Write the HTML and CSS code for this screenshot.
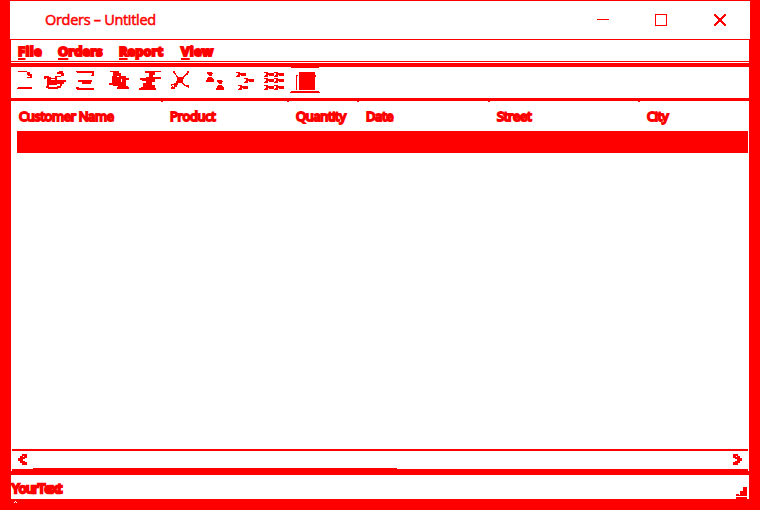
FILE: index.html
```html
<!DOCTYPE html>
<html lang="en">
<head><meta charset="utf-8"><title>Orders – Untitled</title><link rel="stylesheet" href="styles.css"></head>
<body>
<div class="window">
<header class="titlebar"><span class="title">Orders – Untitled</span>
<svg class="controls" width="140" height="38" viewBox="597 1 140 38"><path d="M597 19h12v1h-12z"/><path d="M655 14h12v12h-12zM656 15v10h10v-10z" fill-rule="evenodd"/><path d="M714 14h2v1h1v1h1v1h1v1h2v-1h1v-1h1v-1h1v-1h2v2h-1v1h-1v1h-1v1h-1v2h1v1h1v1h1v1h1v2h-2v-1h-1v-1h-1v-1h-1v-1h-2v1h-1v1h-1v1h-1v1h-2v-2h1v-1h1v-1h1v-1h1v-2h-1v-1h-1v-1h-1v-1h-1z"/></svg></header>
<nav class="menu"><span class="m1"><u>F</u>ile</span><span class="m2"><u>O</u>rders</span><span class="m3"><u>R</u>eport</span><span class="m4"><u>V</u>iew</span></nav>
<div class="rule"></div>
<div class="toolbar">
<svg width="30" height="31" viewBox="11 67 30 31"><path d="M17 71h10v1h3v2h2v4h-5v-1h3v-1h-2v-1h-1v-3h-9v-1h-1zM18 87h14v2h-15v-1h1z"/></svg>
<svg width="30" height="31" viewBox="41 67 30 31"><path fill-rule="evenodd" d="M57 72h2v-1h4v2h1v3h-3v-2h-4v-1h-1zM44 76h5v1h2v1h4v-2h6v1h-4v3h9v2h-2v2h-2v2h-1v2h-3v1h-10v-1h-2v-9h-2zM46 78v8h1v-8zM51 80v-1h4v1zM49 85v2h8v-1h3v-2h-3v1z"/></svg>
<svg width="32" height="31" viewBox="71 67 32 31"><path d="M76 71h18v5h-3v-1h1v-2h-15v-1h-1zM78 80h14v2h-1v2h-9v-2h-4zM76 87h3v1h15v2h-17v-1h-1z"/></svg>
<svg width="31" height="31" viewBox="103 67 31 31"><path fill-rule="evenodd" d="M110 71h9v2h2v3h5v2h3v2h-3v6h2v1h1v2h-12v-2h1v-1h-5v-1h-4v-2h3v-7h1v-4h-3zM117 76v1h2v-1zM121 79v3h1v-3z"/></svg>
<svg width="32" height="31" viewBox="134 67 32 31"><path d="M145 71h16v1h-6v3h-2v2h8v2h-6v3h-3v3h3v3h1v2h-17v-2h2v-1h2v-4h3v-2h-4v-1h-2v-2h6v-1h3v-4h-4z"/></svg>
<svg width="35" height="31" viewBox="166 67 35 31"><path d="M172 71h3v2h1v2h1v1h1v1h5v-1h1v-1h1v-1h1v-1h1v-2h2v2h-1v1h-1v1h-1v1h-1v1h-1v2h-1v4h1v1h1v1h2v1h2v2h-1v-1h-2v-1h-2v-1h-1v-1h-1v-1h-4v2h-1v2h-2v1h-2v1h-2v-2h3v-2h-2v1h-1v-2h3v-1h2v-2h1v-4h-1v-2h-1v-1h-1v-1h-1v-2h-1z"/><path d="M172 86h1v2h-1zM172 88h3v1h-3zM186 74h2v1h-2zM187 85h2v1h-2z"/></svg>
<svg width="30" height="31" viewBox="201 67 30 31"><path id="person" d="M207 72h5v1h1v1h-1v2h-3v-1h-1v-1h-1zM208 77h4v1h1v1h1v3h-8v-2h1v-2h1z"/><use href="#person" x="10" y="8"/></svg>
<svg width="29" height="31" viewBox="231 67 29 31"><path id="key" d="M236 72h4v1h6v3h-5v-1h-1v2h-4v-1h1v-1h1v-2h-2z"/><use href="#key" x="8" y="6"/><use href="#key" x="2" y="13"/></svg>
<svg width="30" height="31" viewBox="260 67 30 31"><use href="#key" x="28"/><use href="#key" x="38"/><use href="#key" x="28" y="6"/><use href="#key" x="38" y="6"/><use href="#key" x="28" y="13"/><use href="#key" x="38" y="13"/></svg>
<svg width="30" height="31" viewBox="290 67 30 31"><path d="M291 67h28v1h-28zM296 75h2v1h-1v14h-1zM299 72h16v3h1v2h-1v13h-16zM291 91h28v1h1v1h-30v-1h1z"/></svg>
</div>
<main class="list">
<div class="columns"><div class="c1"><span>Customer Name</span></div><div class="c2"><span>Product</span></div><div class="c3"><span>Quantity</span></div><div class="c4"><span>Date</span></div><div class="c5"><span>Street</span></div><div class="c6"><span>City</span></div></div>
<div class="selected"></div><div class="space"></div>
<div class="scroll"><svg width="12" height="17" viewBox="17 451 12 17"><path id="arrow" fill-rule="evenodd" d="M22 454h5v4h-2v1h-2v2h2v1h2v3h-5v-2h-2v-2h-2v-3h2v-2h2zM23 456v1h1v-1z"/></svg><svg width="12" height="17" viewBox="731 451 12 17"><use href="#arrow" transform="translate(760 0) scale(-1 1)"/></svg></div>
<div class="thumb"></div><div class="edge"></div>
</main>
<footer class="status"><span>YourText</span><svg width="12" height="24" viewBox="737 475 12 24"><path d="M744 487h4v9h-11v-2h3v1h1v-4h3z"/><path d="M737 497h11v2h-11z"/></svg></footer>
<svg class="notch" width="5" height="3" viewBox="0 0 5 3"><path d="M1 0h1v1h-1zM0 1h1v1h-1zM2 1h1v1h-1z"/></svg>
</div>
</body></html>
```

FILE: styles.css
```css
* { box-sizing: border-box; }
body { margin: 0; background: #f00; color: #f00; overflow: hidden; font-family: "Open Sans", sans-serif; }
svg { display: block; fill: #f00; shape-rendering: crispEdges; flex: none; }
.window { width: 760px; height: 510px; padding: 1px 11px 0; display: flex; flex-direction: column; }
.titlebar { height: 38px; width: 740px; margin-left: -1px; background: #fff; display: flex; justify-content: space-between; padding: 0 13px 0 35px; line-height: 38px; flex: none; }
.title { font-size: 14.5px; letter-spacing: -.3px; -webkit-text-stroke: .5px #f00; }
.menu { height: 21px; margin-top: 1px; background: #fff; display: flex; padding-left: 7px; font-size: 13px; line-height: 22px; font-weight: 700; -webkit-text-stroke: 2px #f00; flex: none; }
.menu u { text-underline-offset: 2px; text-decoration-thickness: 2px; }
.m1 { width: 40px; letter-spacing: .3px; }
.m2 { width: 61px; }
.m3 { width: 62px; }
.m4 { letter-spacing: .3px; }
.rule { height: 1px; margin-top: 1px; background: #fff; flex: none; }
.toolbar { height: 31px; margin-top: 4px; background: #fff; display: flex; flex: none; }
.list { height: 370px; margin-top: 3px; background: #fff; padding: 0 1px; display: flex; flex-direction: column; flex: none; }
.columns { height: 30px; display: flex; font-size: 13px; letter-spacing: -.35px; line-height: 31px; -webkit-text-stroke: 1.9px #f00; }
.columns > div { display: flex; justify-content: space-between; padding-left: 7px; white-space: nowrap; }
.columns > div:not(:last-child)::after { content: ""; width: 2px; height: 1px; background: #f00; }
.c1 { width: 151px; }
.c2 { width: 126px; }
.c3 { width: 70px; }
.c4 { width: 131px; }
.c5 { width: 150px; }
.selected { height: 22px; margin-left: 5px; background: #f00; }
.space { height: 296px; }
.scroll { height: 19px; border-top: 2px solid #f00; display: flex; justify-content: space-between; padding: 0 5px; }
.thumb { width: 364px; height: 1px; margin-left: 21px; background: #f00; }
.edge { height: 2px; background: #f00; }
.status { height: 24px; margin-top: 4px; background: #fff; display: flex; justify-content: space-between; padding: 0 1px; font-size: 13px; line-height: 26px; letter-spacing: -.6px; -webkit-text-stroke: 2.4px #f00; flex: none; }
.notch { fill: #fff; margin: 2px 0 0 3px; }
```
